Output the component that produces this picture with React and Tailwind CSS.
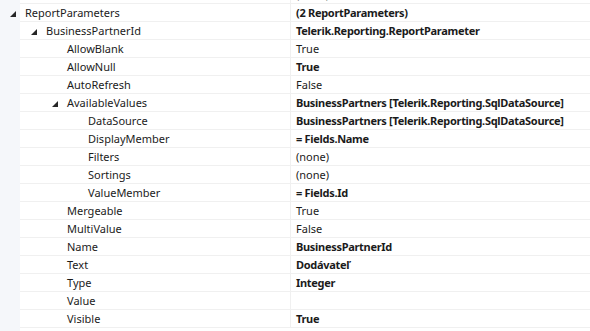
import React from 'react';

const rows = [
  { name: 'Parameters', value: '(none)', level: 0 },
  { name: 'ReportParameters', value: '(2 ReportParameters)', level: 0, open: true, bold: true },
  { name: 'BusinessPartnerId', value: 'Telerik.Reporting.ReportParameter', level: 1, open: true, bold: true },
  { name: 'AllowBlank', value: 'True', level: 2 },
  { name: 'AllowNull', value: 'True', level: 2, bold: true },
  { name: 'AutoRefresh', value: 'False', level: 2 },
  { name: 'AvailableValues', value: 'BusinessPartners [Telerik.Reporting.SqlDataSource]', level: 2, open: true, bold: true },
  { name: 'DataSource', value: 'BusinessPartners [Telerik.Reporting.SqlDataSource]', level: 3, bold: true },
  { name: 'DisplayMember', value: '= Fields.Name', level: 3, bold: true },
  { name: 'Filters', value: '(none)', level: 3 },
  { name: 'Sortings', value: '(none)', level: 3 },
  { name: 'ValueMember', value: '= Fields.Id', level: 3, bold: true },
  { name: 'Mergeable', value: 'True', level: 2 },
  { name: 'MultiValue', value: 'False', level: 2 },
  { name: 'Name', value: 'BusinessPartnerId', level: 2, bold: true },
  { name: 'Text', value: 'Dodávateľ', level: 2, bold: true },
  { name: 'Type', value: 'Integer', level: 2, bold: true },
  { name: 'Value', value: '', level: 2 },
  { name: 'Visible', value: 'True', level: 2, bold: true },
];

const indent = ['pl-[25px]', 'pl-[46px]', 'pl-[67px]', 'pl-[88px]'];
const arrow = ['left-[10px]', 'left-[31px]', 'left-[52px]', 'left-[73px]'];

const Expander = ({ level }) => (
  <svg className={`absolute top-[7px] ${arrow[level]}`} width="6" height="6" viewBox="0 0 6 6">
    <path d="M6 0 L6 6 L0 6 Z" fill="#262626" />
  </svg>
);

export default function App() {
  return (
    <div className="w-[590px] h-[331px] overflow-hidden bg-white text-[11px] text-[#1b1b1b]" style={{ fontFamily: '"Noto Sans", "Open Sans", sans-serif' }}>
      <div className="flex h-full bg-[#f5f7fa]">
        <div className="w-[20px] shrink-0" />
        <div className="flex-1 flex flex-col -mt-[14px] bg-white">
          {rows.map((r, i) => (
            <div key={i} className="flex h-[18px] shrink-0 border-b border-[#f0f0f0] leading-[17px]">
              <div className={`relative w-[290px] shrink-0 whitespace-nowrap -ml-[20px] ${indent[r.level]}`}>
                {r.open && <Expander level={r.level} />}
                <span>{r.name}</span>
              </div>
              <div className={`flex-1 pl-[5px] border-l border-[#f0f0f0] whitespace-nowrap ${r.bold ? 'font-bold tracking-[-0.3px]' : ''}`}>
                {r.value}
              </div>
            </div>
          ))}
        </div>
      </div>
    </div>
  );
}
